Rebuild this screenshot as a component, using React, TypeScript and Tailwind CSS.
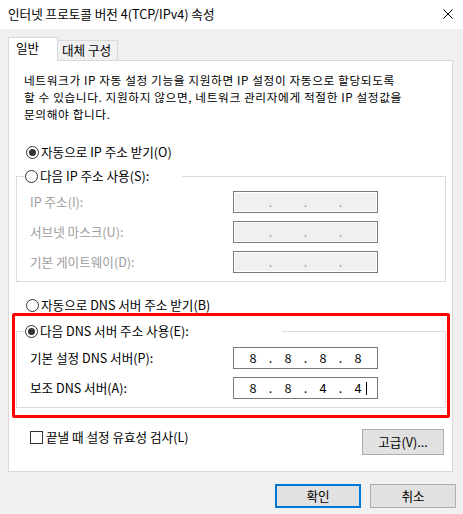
import React from 'react';

const Radio: React.FC<{ checked?: boolean }> = ({ checked }) => (
  <span className="w-[13px] h-[13px] rounded-full border border-[#333333] bg-white flex items-center justify-center shrink-0">
    {checked && <span className="w-[7px] h-[7px] rounded-full bg-[#333333]" />}
  </span>
);

const IpBox: React.FC<{ parts?: string[]; disabled?: boolean; caret?: boolean }> = ({ parts, disabled, caret }) => {
  const vals = parts ?? ['', '', '', ''];
  return (
    <div
      className={
        'w-[145px] h-[22px] border flex items-center pl-[5px] ' +
        (disabled ? 'border-[#7a7a7a] bg-[#f0f0f0] shadow-[inset_0_0_0_1px_#ffffff] text-[#9d9d9d]' : 'border-[#7a7a7a] bg-white text-black')
      }
    >
      {vals.map((v, i) => (
        <React.Fragment key={i}>
          <span className="w-[28px] text-center relative">
            {v}
            {caret && i === 3 && <span className="absolute top-[2px] right-[5px] w-px h-[13px] bg-black" />}
          </span>
          {i < 3 && <span className="w-[7px] text-center">.</span>}
        </React.Fragment>
      ))}
    </div>
  );
};

const Row: React.FC<{ label: string; disabled?: boolean; children: React.ReactNode }> = ({ label, disabled, children }) => (
  <div className="flex items-center h-[22px]">
    <span className={'w-[216px] pl-[13px] ' + (disabled ? 'text-[#9d9d9d]' : 'text-black')}>{label}</span>
    {children}
  </div>
);

const App: React.FC = () => {
  return (
    <div className="w-[463px] h-[514px] bg-[#f0f0f0] relative text-[12.6px] leading-[16px] text-black font-['Noto_Sans_CJK_KR',sans-serif] overflow-hidden">
      {/* title bar */}
      <div className="h-[29px] bg-white flex items-center justify-between pl-[8px] pr-[10px]">
        <span className="pb-[2px]">인터넷 프로토콜 버전 4(TCP/IPv4) 속성</span>
        <svg width="10" height="10" viewBox="0 0 10 10" className="mb-[2px]">
          <path d="M0.5 0.5 L9.5 9.5 M9.5 0.5 L0.5 9.5" stroke="#000" strokeWidth="1" />
        </svg>
      </div>

      {/* tabs */}
      <div className="flex items-end pl-[8px] pt-[8px] h-[31px]">
        <div className="w-[50px] h-[24px] -mb-px relative z-10 bg-white border border-b-0 border-[#d9d9d9] pl-[7px] pt-[2px]">일반</div>
        <div className="w-[60px] h-[20px] bg-[#f0f0f0] border border-l-0 border-b-0 border-[#d9d9d9] pl-[4px] pt-[1px]">대체 구성</div>
      </div>

      {/* panel */}
      <div className="ml-[8px] w-[445px] h-[412px] bg-white border border-[#d9d9d9] flex flex-col">
        <div className="ml-[15px] mt-[10px] whitespace-nowrap text-[11.7px] tracking-[0.6px] leading-[17px] flex flex-col">
          <span>네트워크가 IP 자동 설정 기능을 지원하면 IP 설정이 자동으로 할당되도록</span>
          <span>할 수 있습니다. 지원하지 않으면, 네트워크 관리자에게 적절한 IP 설정값을</span>
          <span>문의해야 합니다.</span>
        </div>

        <label className="ml-[17px] mt-[22px] h-[16px] flex items-center gap-[2px]">
          <Radio checked />
          <span>자동으로 IP 주소 받기(O)</span>
        </label>

        <fieldset className="ml-[7px] mt-[8px] w-[430px] border border-[#dcdcdc] pb-[8px]">
          <legend className="ml-[8px] pr-[33px]">
            <span className="flex items-center gap-[2px] h-[16px]">
              <Radio />
              <span>다음 IP 주소 사용(S):</span>
            </span>
          </legend>
          <div className="mt-[7px] flex flex-col gap-[8px]">
            <Row label="IP 주소(I):" disabled><IpBox disabled /></Row>
            <Row label="서브넷 마스크(U):" disabled><IpBox disabled /></Row>
            <Row label="기본 게이트웨이(D):" disabled><IpBox disabled /></Row>
          </div>
        </fieldset>

        <label className="ml-[17px] mt-[15px] h-[16px] flex items-center gap-[2px]">
          <Radio />
          <span>자동으로 DNS 서버 주소 받기(B)</span>
        </label>

        <fieldset className="ml-[7px] mt-[10px] w-[430px] border border-[#dcdcdc] pb-[8px]">
          <legend className="ml-[8px] pr-[93px]">
            <span className="flex items-center gap-[2px] h-[16px]">
              <Radio checked />
              <span>다음 DNS 서버 주소 사용(E):</span>
            </span>
          </legend>
          <div className="mt-[8px] flex flex-col gap-[8px]">
            <Row label="기본 설정 DNS 서버(P):"><IpBox parts={['8', '8', '8', '8']} /></Row>
            <Row label="보조 DNS 서버(A):"><IpBox parts={['8', '8', '4', '4']} caret /></Row>
          </div>
        </fieldset>

        <div className="mt-[21px] flex items-start justify-between pl-[21px] pr-[8px]">
          <label className="flex items-center gap-[3px] h-[14px] mt-[1px]">
            <span className="w-[13px] h-[13px] border border-[#333333] bg-white" />
            <span>끝낼 때 설정 유효성 검사(L)</span>
          </label>
          <button className="w-[82px] h-[26px] bg-[#e1e1e1] border border-[#adadad]">고급(V)...</button>
        </div>
      </div>

      {/* highlight */}
      <div className="absolute left-[12px] top-[313px] w-[438px] h-[105px] border-[3px] border-[#ff0000] rounded-[2px] pointer-events-none" />

      {/* dialog buttons */}
      <div className="mt-[12px] flex justify-end gap-[9px] pr-[7px]">
        <button className="w-[86px] h-[24px] bg-[#e1e1e1] border-2 border-[#0078d7]">확인</button>
        <button className="w-[86px] h-[24px] bg-[#e1e1e1] border border-[#adadad]">취소</button>
      </div>
    </div>
  );
};

export default App;
